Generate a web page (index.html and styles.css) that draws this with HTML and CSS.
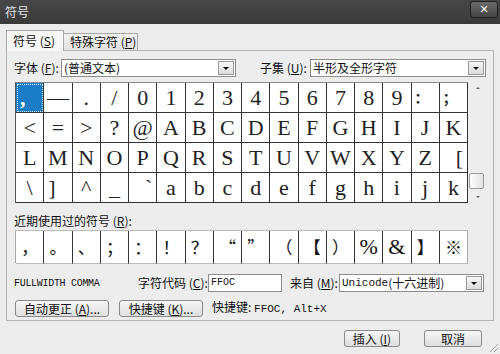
FILE: index.html
```html
<!DOCTYPE html>
<html lang="zh-CN">
<head>
    <meta charset="UTF-8">
    <title>符号</title>
    <link rel="stylesheet" href="styles.css">
</head>
<body>
    <div class="window">
        <div class="titlebar">
            <span class="title">符号</span>
            <span class="close">✕</span>
        </div>

        <div class="tabs">
            <div class="tab active">符号 (<u>S</u>)</div>
            <div class="tab">特殊字符 (<u>P</u>)</div>
        </div>

        <div class="panel">
            <div class="font-row">
                <span class="label font-label">字体 (<u>F</u>):</span>
                <div class="select font-select">
                    <span class="select-text">(普通文本)</span>
                    <span class="drop"></span>
                </div>
                <span class="label subset-label">子集 (<u>U</u>):</span>
                <div class="select subset-select">
                    <span class="select-text">半形及全形字符</span>
                    <span class="drop"></span>
                </div>
            </div>

            <div class="grid-row">
                <div class="char-grid" id="charGrid"></div>
                <div class="scrollbar">
                    <span class="arrow up"></span>
                    <span class="track"></span>
                    <span class="thumb"></span>
                    <span class="arrow down"></span>
                </div>
            </div>

            <div class="label recent-label">近期使用过的符号 (<u>R</u>):</div>
            <div class="recent-grid" id="recentGrid"></div>

            <div class="info-row">
                <span class="char-name">FULLWIDTH COMMA</span>
                <span class="label code-label">字符代码 (<u>C</u>):</span>
                <div class="input code-input">FFOC</div>
                <span class="label from-label">来自 (<u>M</u>):</span>
                <div class="select from-select">
                    <span class="select-text mono">Unicode</span><span class="select-text">(十六进制)</span>
                    <span class="drop"></span>
                </div>
            </div>

            <div class="action-row">
                <button class="btn auto-btn">自动更正 (<u>A</u>)...</button>
                <button class="btn key-btn">快捷键 (<u>K</u>)...</button>
                <span class="label shortcut">快捷键: <span class="mono">FFOC, Alt+X</span></span>
            </div>
        </div>

        <div class="footer">
            <button class="btn insert-btn">插入 (<u>I</u>)</button>
            <button class="btn cancel-btn">取消</button>
        </div>
        <span class="grip"></span>
    </div>

    <script>
        // Fullwidth forms block shown as the symbol table
        const chars = [
            ',', '—', '.', '/', '0', '1', '2', '3', '4', '5', '6', '7', '8', '9', '：', '；',
            '<', '=', '>', '?', '@', 'A', 'B', 'C', 'D', 'E', 'F', 'G', 'H', 'I', 'J', 'K',
            'L', 'M', 'N', 'O', 'P', 'Q', 'R', 'S', 'T', 'U', 'V', 'W', 'X', 'Y', 'Z', '[',
            '\\', ']', '^', '_', '`', 'a', 'b', 'c', 'd', 'e', 'f', 'g', 'h', 'i', 'j', 'k'
        ];
        const recent = ['，', '。', '、', '；', '：', '！', '？', '“', '”', '（', '【', '）', '%', '&', '】', '※'];

        const charGrid = document.getElementById('charGrid');
        chars.forEach((c, i) => {
            const cell = document.createElement('div');
            cell.className = 'cell';
            if (i === 0) cell.classList.add('selected');
            if (c === '：' || c === '；') cell.classList.add('cjk');
            if (c === '[' || c === '`') cell.classList.add('right');
            if (c === ']') cell.classList.add('left');
            cell.textContent = c;
            charGrid.appendChild(cell);
        });

        const recentGrid = document.getElementById('recentGrid');
        recent.forEach(c => {
            const cell = document.createElement('div');
            cell.className = 'cell';
            if (c === '%' || c === '&') cell.classList.add('serif');
            cell.textContent = c;
            recentGrid.appendChild(cell);
        });
    </script>
</body>
</html>
```

FILE: styles.css
```css
body {
    margin: 0;
    font-family: "Noto Sans CJK SC", sans-serif;
    font-size: 12px;
    color: #111;
    background-color: #ececec;
}

u {
    text-decoration: underline;
}

.window {
    position: relative;
    width: 500px;
    height: 354px;
    overflow: hidden;
    background-color: #ececec;
}

.titlebar {
    height: 24px;
    display: flex;
    align-items: flex-start;
    justify-content: space-between;
    background: linear-gradient(#474747, #3a3a3a);
}

.title {
    margin: 4px 0 0 5px;
    font-size: 12px;
    line-height: 16px;
    color: #e4e4e4;
}

.close {
    width: 26px;
    height: 15px;
    margin: 1px 2px 0 0;
    border: 1px solid #1e1e1e;
    border-radius: 3px;
    background: linear-gradient(#6a6a6a, #444);
    color: #fff;
    font-family: "DejaVu Sans", sans-serif;
    font-size: 11px;
    font-weight: bold;
    line-height: 15px;
    text-align: center;
}

.tabs {
    display: flex;
    align-items: flex-end;
    height: 20px;
    margin: 6px 0 0 6px;
}

.tab {
    height: 16px;
    padding: 0 6px;
    border: 1px solid #a9a9a9;
    border-bottom: none;
    background: linear-gradient(#f0f0f0, #e2e2e2);
    line-height: 16px;
    white-space: nowrap;
}

.tab.active {
    width: 44px;
    height: 20px;
    line-height: 20px;
    background-color: #f7f7f7;
    background-image: none;
    position: relative;
    z-index: 1;
    margin-bottom: -1px;
}

.tab + .tab {
    width: 61px;
    border-left: none;
}

.panel {
    height: 261px;
    margin: 0 6px;
    padding: 8px 0 0 8px;
    border: 1px solid #b4b4b4;
    background-color: #ededed;
}

.label {
    white-space: nowrap;
    line-height: 18px;
}

.font-row {
    display: flex;
    height: 18px;
}

.font-label {
    width: 47px;
    margin-left: -1px;
}

.subset-label {
    width: 50px;
    margin-left: 24px;
}

.select {
    position: relative;
    height: 16px;
    border: 1px solid #8d8d8d;
    background-color: #fff;
    display: flex;
    align-items: center;
}

.select-text {
    padding-left: 2px;
    line-height: 16px;
}

.select-text + .select-text {
    padding-left: 0;
}

.drop {
    position: absolute;
    right: 1px;
    top: 1px;
    width: 14px;
    height: 12px;
    border: 1px solid #9a9a9a;
    background: linear-gradient(#f6f6f6, #dcdcdc);
}

.drop::after {
    content: "";
    position: absolute;
    left: 4px;
    top: 5px;
    border-left: 3px solid transparent;
    border-right: 3px solid transparent;
    border-top: 3px solid #111;
}

.font-select {
    width: 173px;
}

.subset-select {
    width: 174px;
}

.mono {
    font-family: "Liberation Mono", monospace;
    font-size: 11px;
}

.grid-row {
    display: flex;
    margin-top: 5px;
    height: 121px;
}

.char-grid,
.recent-grid {
    display: grid;
    grid-template-columns: repeat(16, 1fr);
    width: 452px;
    border-left: 1px solid #555;
    border-top: 1px solid #888;
    background-color: #fff;
}

.char-grid .cell {
    height: 29px;
    border-right: 1px solid #333;
    border-bottom: 1px solid #333;
    font-family: "Liberation Serif", "Noto Sans CJK SC", serif;
    font-size: 22px;
    line-height: 29px;
    text-align: center;
    color: #222;
}

.char-grid .cell.cjk {
    font-family: "Noto Sans CJK SC", sans-serif;
    font-size: 14px;
    font-weight: bold;
    text-align: left;
    padding-left: 3px;
}

.char-grid .cell.right {
    text-align: right;
    padding-right: 4px;
}

.char-grid .cell.left {
    text-align: left;
    padding-left: 4px;
}

.char-grid .cell.selected {
    background-color: #1b7dc8;
    color: #fff;
    outline: 1px dotted #cfe6f7;
    outline-offset: -2px;
    text-align: left;
    padding-left: 4px;
    font-weight: bold;
}

.scrollbar {
    position: relative;
    width: 17px;
    display: flex;
    flex-direction: column;
    align-items: center;
    margin-left: 1px;
}

.arrow {
    height: 12px;
    width: 14px;
    position: relative;
}

.arrow::after {
    content: "";
    position: absolute;
    left: 5px;
    top: 5px;
    border-left: 2px solid transparent;
    border-right: 2px solid transparent;
}

.arrow.up::after {
    border-bottom: 2px solid #666;
}

.arrow.down::after {
    border-top: 2px solid #666;
}

.track {
    flex: 1;
}

.thumb {
    position: absolute;
    left: 0;
    top: 91px;
    width: 13px;
    height: 14px;
    border: 1px solid #9c9c9c;
    border-radius: 2px;
    background: linear-gradient(90deg, #fdfdfd, #e2e2e2);
}

.recent-label {
    margin: 9px 0 0 -1px;
    height: 18px;
}

.recent-grid {
    margin-top: 0;
    height: 32px;
    border-top-color: #bbb;
    border-left-color: #aaa;
}

.recent-grid .cell {
    height: 32px;
    border-right: 1px solid #333;
    border-bottom: 1px solid #bbb;
    font-size: 17px;
    line-height: 32px;
    text-align: center;
    color: #111;
}

.recent-grid .cell:last-child {
    border-right-color: #aaa;
}

.recent-grid .cell.serif {
    font-family: "Liberation Serif", serif;
    font-size: 22px;
}

.info-row {
    display: flex;
    align-items: center;
    margin-top: 11px;
    height: 18px;
}

.char-name {
    width: 124px;
    margin-left: -1px;
    font-family: "Liberation Mono", monospace;
    font-size: 10px;
    letter-spacing: -0.3px;
}

.code-label {
    width: 70px;
}

.input {
    height: 16px;
    border: 1px solid #8d8d8d;
    background-color: #fff;
    line-height: 16px;
    padding-left: 2px;
    font-family: "Liberation Mono", monospace;
    font-size: 10px;
}

.code-input {
    width: 70px;
}

.from-label {
    width: 49px;
    margin-left: 8px;
}

.from-select {
    width: 143px;
}

.action-row {
    display: flex;
    align-items: center;
    margin-top: 6px;
}

.btn {
    height: 17px;
    padding: 0;
    border: 1px solid #8b8b8b;
    border-radius: 3px;
    background: linear-gradient(#f7f7f7, #dedede);
    font-family: "Noto Sans CJK SC", sans-serif;
    font-size: 12px;
    line-height: 15px;
    color: #111;
}

.auto-btn {
    width: 94px;
}

.key-btn {
    width: 84px;
    margin-left: 10px;
}

.shortcut {
    margin-left: 9px;
}

.footer {
    display: flex;
    justify-content: flex-end;
    gap: 24px;
    margin: 9px 18px 0 0;
}

.insert-btn {
    width: 56px;
}

.cancel-btn {
    width: 58px;
}

.grip {
    position: absolute;
    right: 2px;
    bottom: 2px;
    width: 8px;
    height: 8px;
    background: linear-gradient(135deg, transparent 45%, #aaa 45%, #aaa 55%, transparent 55%, transparent 70%, #aaa 70%, #aaa 80%, transparent 80%);
}
```
